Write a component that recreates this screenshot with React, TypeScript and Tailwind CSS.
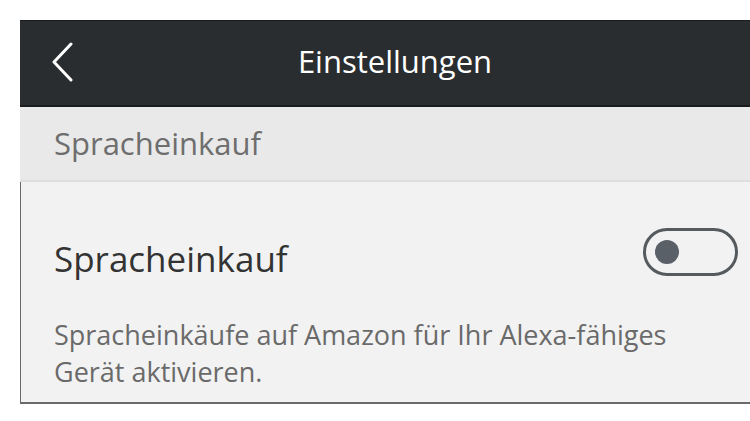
import React from "react";

export default function App() {
  return (
    <div className="w-[750px] h-[421px] bg-white pt-5 pl-5" style={{ fontFamily: '"Open Sans", "Noto Sans", sans-serif' }}>
      <div className="w-[730px] flex flex-col">
        <div className="h-[87px] bg-[#2a2d2f] border-t border-b-2 border-[#1a1b1c] flex items-center relative">
          <svg className="absolute left-[31px] top-[21px]" width="24" height="40" viewBox="0 0 24 40">
            <path d="M20 2 L3 20 L20 38" fill="none" stroke="#ffffff" strokeWidth="3" strokeLinecap="round" strokeLinejoin="round" />
          </svg>
          <div className="flex-1 text-center text-white text-[31px] leading-none pl-[20px] mb-[4px]">Einstellungen</div>
        </div>
        <div className="h-[75px] bg-[#e9e9e9] border-b-2 border-[#dedede] flex items-center pl-[34px] text-[31px] leading-none text-[#6e6e6e]">
          Spracheinkauf
        </div>
        <div className="h-[222px] bg-[#f2f2f2] border-l border-b-2 border-[#6a6a6a] pl-[33px] pr-[12px]">
          <div className="flex items-start justify-between pt-[46px]">
            <div className="mt-[13px] text-[35px] text-[#333333] leading-none">Spracheinkauf</div>
            <div className="w-[95px] h-[48px] rounded-full border-[3px] border-[#555a5e] flex items-center pl-[9px]">
              <div className="w-[24px] h-[24px] rounded-full bg-[#5a6068]"></div>
            </div>
          </div>
          <div className="mt-[40px] text-[27px] leading-[37px] text-[#6a6a6a]">
            Spracheinkäufe auf Amazon für Ihr Alexa-fähiges<br />Gerät aktivieren.
          </div>
        </div>
      </div>
    </div>
  );
}
